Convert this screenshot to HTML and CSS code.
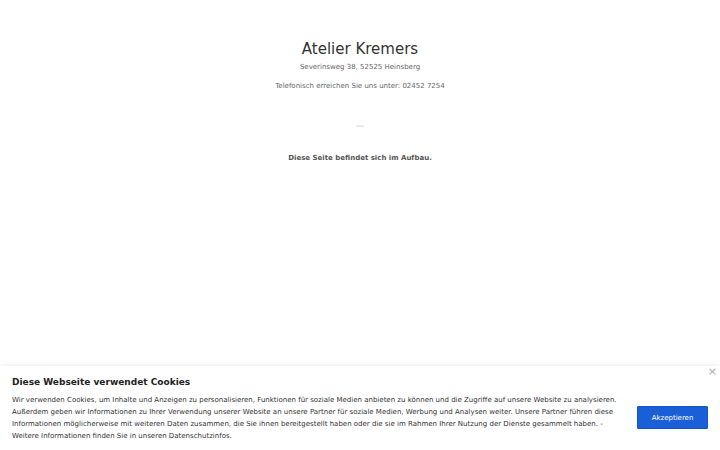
FILE: index.html
```html
<!DOCTYPE html>
<html lang="de">
<head>
<meta charset="utf-8">
<title>Atelier Kremers</title>
<link rel="stylesheet" href="styles.css">
</head>
<body>
<main class="page">
  <h1 class="title">Atelier Kremers</h1>
  <p class="address">Severinsweg 38, 52525 Heinsberg</p>
  <p class="phone">Telefonisch erreichen Sie uns unter: 02452 7254</p>
  <p class="sep">---</p>
  <p class="notice">Diese Seite befindet sich im Aufbau.</p>
</main>
<div class="cookie">
  <div class="cookie-text">
    <h2 class="cookie-title">Diese Webseite verwendet Cookies</h2>
    <p class="cookie-body">Wir verwenden Cookies, um Inhalte und Anzeigen zu personalisieren, Funktionen für soziale Medien anbieten zu können und die Zugriffe auf unsere Website zu analysieren. Außerdem geben wir Informationen zu Ihrer Verwendung unserer Website an unsere Partner für soziale Medien, Werbung und Analysen weiter. Unsere Partner führen diese Informationen möglicherweise mit weiteren Daten zusammen, die Sie ihnen bereitgestellt haben oder die sie im Rahmen Ihrer Nutzung der Dienste gesammelt haben. - Weitere Informationen finden Sie in unseren Datenschutzinfos.</p>
  </div>
  <button class="accept">Akzeptieren</button>
  <span class="close">×</span>
</div>
</body>
</html>
```
FILE: styles.css
```css
html, body {
  margin: 0;
  padding: 0;
  background: #fff;
}
body {
  font-family: "DejaVu Sans", sans-serif;
  color: #555;
  width: 720px;
  height: 450px;
  overflow: hidden;
  position: relative;
}
.page {
  text-align: center;
  padding-top: 40px;
}
.title {
  margin: 0;
  font-size: 15px;
  font-weight: normal;
  color: #333;
  line-height: 18px;
}
.address {
  margin: 4px 0 0;
  font-size: 7px;
  line-height: 11px;
  color: #666;
}
.phone {
  margin: 8px 0 0;
  font-size: 7px;
  line-height: 11px;
  color: #666;
}
.sep {
  margin: 29px 0 0;
  font-size: 7px;
  line-height: 11px;
  color: #999;
}
.notice {
  margin: 21px 0 0;
  font-size: 7px;
  line-height: 11px;
  font-weight: bold;
  color: #555;
}
.cookie {
  position: absolute;
  left: 0;
  right: 0;
  bottom: 0;
  height: 84px;
  background: #fff;
  box-shadow: 0 -1px 6px rgba(0,0,0,0.08);
  display: flex;
  align-items: center;
  padding: 0 12px;
  box-sizing: border-box;
}
.cookie-text {
  flex: 1;
}
.cookie-title {
  margin: 0 0 5px;
  font-size: 9px;
  line-height: 14px;
  font-weight: bold;
  color: #222;
}
.cookie-body {
  margin: 0;
  font-size: 7px;
  line-height: 12px;
  color: #333;
}
.accept {
  margin: 19px 0 0 20px;
  width: 71px;
  height: 23px;
  background: #1b5fd8;
  color: #fff;
  border: 1px solid #1655c5;
  border-radius: 1px;
  font-family: "DejaVu Sans", sans-serif;
  font-size: 7px;
  padding: 0;
}
.close {
  position: absolute;
  right: 3px;
  top: 0;
  font-size: 11px;
  color: #aaa;
  line-height: 12px;
}
```
